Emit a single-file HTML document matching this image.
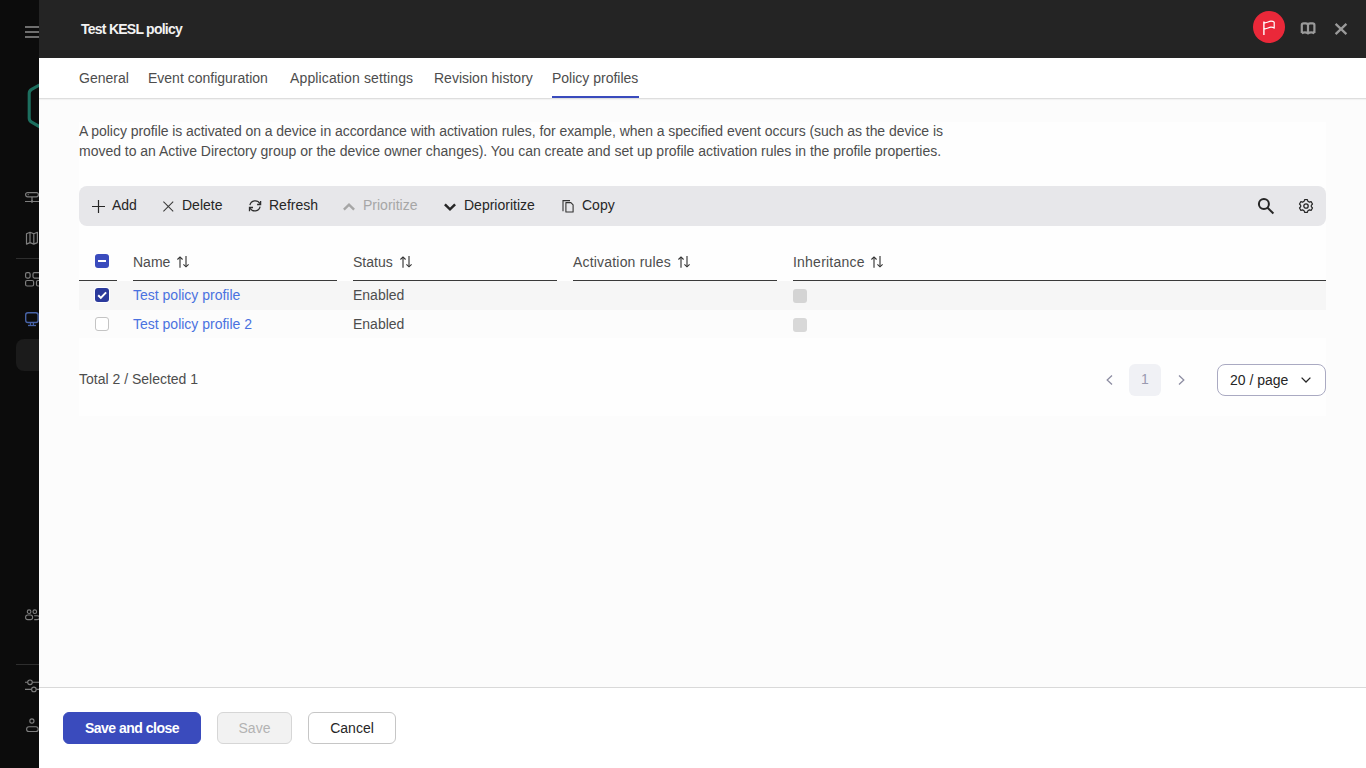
<!DOCTYPE html>
<html><head><meta charset="utf-8">
<style>
*{box-sizing:border-box;margin:0;padding:0}
html,body{width:1366px;height:768px;overflow:hidden;font-family:"Liberation Sans",sans-serif;font-size:14px;background:#0c0c0c}
svg{position:absolute;overflow:visible}
#side{position:absolute;left:0;top:0;width:39px;height:768px;background:#0c0c0c;overflow:hidden}
#modal{position:absolute;left:39px;top:0;width:1327px;height:768px;background:#fcfcfc}
#hdr{position:absolute;left:0;top:0;width:1327px;height:58px;background:#242424}
#title{position:absolute;left:42px;top:20px;color:#f2f2f2;font-weight:bold;font-size:14px;line-height:18px;white-space:nowrap;letter-spacing:-0.75px}
#tabs{position:absolute;left:0;top:58px;width:1327px;height:41px;background:#fff;border-bottom:1px solid #dedede;box-shadow:0 1px 1px rgba(0,0,0,0.04)}
.tab{position:absolute;top:12px;color:#4d4d4d;font-size:14px;line-height:16px;white-space:nowrap}
#tabline{position:absolute;left:513px;top:38px;width:87px;height:2px;background:#3a4bbd}
#panel{position:absolute;left:40px;top:122px;width:1247px;height:294px;background:#fefefe}
.desc{position:absolute;left:40px;color:#4d4d4d;line-height:20px;white-space:nowrap;letter-spacing:-0.053px}
#tb{position:absolute;left:40px;top:186px;width:1247px;height:40px;background:#e7e7ea;border-radius:8px}
.tbt{position:absolute;top:11px;color:#262626;line-height:16px;white-space:nowrap}
.th{position:absolute;top:254px;color:#4d4d4d;line-height:16px;white-space:nowrap}
.hl{position:absolute;top:280px;height:1px;background:#3a3a3a}
.row{position:absolute;left:40px;width:1247px}
.cell{position:absolute;line-height:16px;white-space:nowrap;color:#4d4d4d}
.lnk{color:#4a72e0}
#footline{position:absolute;left:0;top:687px;width:1327px;height:1px;background:#d9d9d9}
#foot{position:absolute;left:0;top:688px;width:1327px;height:80px;background:#fff}
.btn{position:absolute;top:712px;height:32px;border-radius:6px;text-align:center;line-height:30px;font-size:14px;white-space:nowrap}
</style></head><body>
<div id="side">
  <!-- hamburger -->
  <svg style="left:25px;top:26px" width="16" height="12"><path d="M0 1H16M0 6H16M0 11H16" stroke="#6e6e6e" stroke-width="2"/></svg>
  <!-- hexagon logo -->
  <svg style="left:0;top:0" width="60" height="140"><path d="M57 75.5 L31.6 89.4 Q29.2 90.8 29.2 93.6 L29.2 118 Q29.2 120.8 31.6 122.2 L57 136.5" stroke="#1d6f5f" stroke-width="3.1" fill="none"/></svg>
  <!-- network -->
  <svg style="left:25px;top:192px" width="16" height="12"><rect x="0.6" y="0.6" width="12.8" height="4.2" rx="2" stroke="#7f7f7f" stroke-width="1.2" fill="none"/><path d="M7 5V9.5M0 9.5H16" stroke="#7f7f7f" stroke-width="1.2"/><circle cx="3.2" cy="2.7" r="0.6" fill="#7f7f7f"/><circle cx="7" cy="9.5" r="1.2" fill="#7f7f7f"/></svg>
  <!-- map -->
  <svg style="left:25px;top:231px" width="16" height="14"><path d="M1.5 2.8 L5 1.3 L8.8 2.8 L12.4 1.3 V11.6 L8.8 13.1 L5 11.6 L1.5 13.1 Z M5 1.3 V11.6 M8.8 2.8 V13.1" stroke="#7f7f7f" stroke-width="1.2" fill="none" stroke-linejoin="round"/></svg>
  <div style="position:absolute;left:16px;top:258px;width:30px;height:1px;background:#2e2e2e"></div>
  <!-- grid -->
  <svg style="left:25px;top:272px" width="16" height="15"><rect x="0.6" y="0.6" width="4.5" height="5.5" rx="1.5" stroke="#7f7f7f" stroke-width="1.2" fill="none"/><rect x="8" y="0.6" width="8" height="5.5" rx="1.5" stroke="#7f7f7f" stroke-width="1.2" fill="none"/><rect x="0.6" y="8.5" width="8" height="5.5" rx="1.5" stroke="#7f7f7f" stroke-width="1.2" fill="none"/><rect x="11.5" y="8.5" width="8" height="5.5" rx="1.5" stroke="#7f7f7f" stroke-width="1.2" fill="none"/></svg>
  <!-- monitor -->
  <svg style="left:25px;top:312px" width="16" height="15"><rect x="0.7" y="0.7" width="12.4" height="9.8" rx="2.2" stroke="#4864a8" stroke-width="1.35" fill="none"/><path d="M5.4 10.6V13M8.4 10.6V13" stroke="#4864a8" stroke-width="1.1"/><path d="M3 13.5 H11" stroke="#4864a8" stroke-width="1.3"/></svg>
  <div style="position:absolute;left:16px;top:339px;width:40px;height:32px;background:#1b1b1b;border-radius:8px"></div>
  <!-- users -->
  <svg style="left:25px;top:609px" width="16" height="12"><circle cx="4.1" cy="2.7" r="1.8" stroke="#7f7f7f" stroke-width="1.1" fill="none"/><circle cx="9.8" cy="2.7" r="1.8" stroke="#7f7f7f" stroke-width="1.1" fill="none"/><rect x="0.6" y="6" width="7" height="4.6" rx="2.2" stroke="#7f7f7f" stroke-width="1.1" fill="none"/><path d="M9.2 6.7 H12 Q14.5 6.7 14.5 8.7 Q14.5 10.6 12 10.6 H9.2" stroke="#7f7f7f" stroke-width="1.1" fill="none"/></svg>
  <div style="position:absolute;left:16px;top:664px;width:30px;height:1px;background:#2e2e2e"></div>
  <!-- sliders -->
  <svg style="left:25px;top:679px" width="16" height="14"><path d="M0 3.3H2.6M7.4 3.3H16M0 10.4H6.5M11.3 10.4H16" stroke="#7f7f7f" stroke-width="1.1"/><circle cx="5" cy="3.3" r="2.3" stroke="#7f7f7f" stroke-width="1.1" fill="none"/><circle cx="8.9" cy="10.4" r="2.3" stroke="#7f7f7f" stroke-width="1.1" fill="none"/></svg>
  <!-- user -->
  <svg style="left:25px;top:718px" width="16" height="14"><circle cx="6.9" cy="3" r="2.1" stroke="#7f7f7f" stroke-width="1.1" fill="none"/><rect x="1.6" y="8.8" width="11.6" height="4.7" rx="2.35" stroke="#7f7f7f" stroke-width="1.1" fill="none"/></svg>
</div>
<div id="modal">
  <div id="hdr">
    <div id="title">Test KESL policy</div>
    <div style="position:absolute;left:1214px;top:11px;width:32px;height:32px;border-radius:50%;background:#ea2839"></div>
    <svg style="left:1224px;top:21px" width="14" height="15"><path d="M0.9 0.6V14" stroke="#fff" stroke-width="1.4"/><path d="M0.9 1.6 C3.5 2.6 5.5 0.2 8 0.2 C9.5 0.2 10.6 0.6 11.2 1.2 V7.2 C10.6 6.6 9.5 6.2 8 6.2 C5.5 6.2 3.5 8.6 0.9 7.6" stroke="#fff" stroke-width="1.2" fill="none" stroke-linejoin="round"/></svg>
    <!-- book -->
    <svg style="left:1261px;top:22px" width="16" height="13"><path d="M1.8 11 V3 Q1.8 1.3 3.6 1.3 H5.8 Q8 1.3 8 3.2 V11 M14.4 11 V3 Q14.4 1.3 12.6 1.3 H10.2 Q8 1.3 8 3.2 M1.8 11.4 Q4.9 9.4 8 11.4 Q11.1 9.4 14.4 11.4" stroke="#9a9a9a" stroke-width="2.2" fill="none"/></svg>
    <!-- close -->
    <svg style="left:1295px;top:22px" width="14" height="14"><path d="M1.6 1.8 L12.4 12.1 M12.4 1.8 L1.6 12.1" stroke="#9a9a9a" stroke-width="2.3"/></svg>
  </div>
  <div id="tabs">
    <div class="tab" style="left:40px">General</div>
    <div class="tab" style="left:109px">Event configuration</div>
    <div class="tab" style="left:251px;letter-spacing:0.13px">Application settings</div>
    <div class="tab" style="left:395px">Revision history</div>
    <div class="tab" style="left:513px">Policy profiles</div>
    <div id="tabline"></div>
  </div>
  <div id="panel"></div>
  <div class="desc" style="top:121px">A policy profile is activated on a device in accordance with activation rules, for example, when a specified event occurs (such as the device is</div>
  <div class="desc" style="top:141px;letter-spacing:-0.018px">moved to an Active Directory group or the device owner changes). You can create and set up profile activation rules in the profile properties.</div>
  <div id="tb">
    <svg style="left:13px;top:14px" width="13" height="13"><path d="M6.5 0V13M0 6.5H13" stroke="#262626" stroke-width="1.2"/></svg>
    <div class="tbt" style="left:33px">Add</div>
    <svg style="left:84px;top:14.5px" width="11" height="11"><path d="M0.4 0.6L10.2 10.4M10.2 0.6L0.4 10.4" stroke="#3a3a3a" stroke-width="1.05"/></svg>
    <div class="tbt" style="left:103px">Delete</div>
    <svg style="left:170px;top:14px" width="13" height="12"><path d="M0.9 5.1 A5.4 5.4 0 0 1 10.9 3.6 M11.1 6.6 A5.4 5.4 0 0 1 1.1 8.2" stroke="#2e2e2e" stroke-width="1.25" fill="none"/><path d="M11.6 0.9 V4.5 H8.1 M0.5 11.2 V7.5 H4" stroke="#2e2e2e" stroke-width="1.3" fill="none"/></svg>
    <div class="tbt" style="left:190px">Refresh</div>
    <svg style="left:264px;top:17px" width="12" height="8"><path d="M0.9 6.6 L6 1.6 L11.1 6.6" stroke="#a6a6a6" stroke-width="2.4" fill="none"/></svg>
    <div class="tbt" style="left:284px;color:#a6a6a6">Prioritize</div>
    <svg style="left:365px;top:17px" width="12" height="8"><path d="M0.9 1.3 L6 6.3 L11.1 1.3" stroke="#262626" stroke-width="2.5" fill="none"/></svg>
    <div class="tbt" style="left:385px">Deprioritize</div>
    <svg style="left:483px;top:13px" width="12" height="14"><path d="M1 12.3 V1.6 H8" stroke="#333" stroke-width="1.1" fill="none"/><path d="M3.9 13 V3.6 H8.9 L11.1 5.8 V13 Z" stroke="#333" stroke-width="1.1" fill="none" stroke-linejoin="round"/></svg>
    <div class="tbt" style="left:503px">Copy</div>
    <svg style="left:1179px;top:12px" width="16" height="16"><circle cx="5.9" cy="6" r="5" stroke="#262626" stroke-width="2" fill="none"/><path d="M9.6 9.7 L15.4 15.5" stroke="#262626" stroke-width="2"/></svg>
    <svg style="left:1220px;top:13px" width="14" height="14"><path d="M5.6 0.6 H8.4 L8.9 2.3 L10.4 3.1 L12.1 2.6 L13.5 5 L12.3 6.3 V7.7 L13.5 9 L12.1 11.4 L10.4 10.9 L8.9 11.7 L8.4 13.4 H5.6 L5.1 11.7 L3.6 10.9 L1.9 11.4 L0.5 9 L1.7 7.7 V6.3 L0.5 5 L1.9 2.6 L3.6 3.1 L5.1 2.3 Z" stroke="#262626" stroke-width="1.2" fill="none" stroke-linejoin="round"/><circle cx="7" cy="7" r="2.2" stroke="#262626" stroke-width="1.3" fill="none"/></svg>
  </div>
  <!-- header checkbox -->
  <div style="position:absolute;left:56px;top:254px;width:14px;height:14px;border-radius:3px;background:#3a4bbd"></div>
  <div style="position:absolute;left:59px;top:260px;width:8px;height:2px;background:#fff"></div>
  <div class="th" style="left:94px">Name</div>
  <div class="th" style="left:314px">Status</div>
  <div class="th" style="left:534px;letter-spacing:0.19px">Activation rules</div>
  <div class="th" style="left:754px;letter-spacing:0.22px">Inheritance</div>
  <svg style="left:138px;top:256px" width="13" height="12"><path d="M3 1.2V11.75M9 0.1V10.6" stroke="#6f6f6f" stroke-width="1.6"/><path d="M0.4 3.5 L3 1 L5.6 3.5 M6.4 8.4 L9 10.8 L11.6 8.4" stroke="#333" stroke-width="1.1" fill="none"/></svg>
  <svg style="left:361px;top:256px" width="13" height="12"><path d="M3 1.2V11.75M9 0.1V10.6" stroke="#6f6f6f" stroke-width="1.6"/><path d="M0.4 3.5 L3 1 L5.6 3.5 M6.4 8.4 L9 10.8 L11.6 8.4" stroke="#333" stroke-width="1.1" fill="none"/></svg>
  <svg style="left:639px;top:256px" width="13" height="12"><path d="M3 1.2V11.75M9 0.1V10.6" stroke="#6f6f6f" stroke-width="1.6"/><path d="M0.4 3.5 L3 1 L5.6 3.5 M6.4 8.4 L9 10.8 L11.6 8.4" stroke="#333" stroke-width="1.1" fill="none"/></svg>
  <svg style="left:832px;top:256px" width="13" height="12"><path d="M3 1.2V11.75M9 0.1V10.6" stroke="#6f6f6f" stroke-width="1.6"/><path d="M0.4 3.5 L3 1 L5.6 3.5 M6.4 8.4 L9 10.8 L11.6 8.4" stroke="#333" stroke-width="1.1" fill="none"/></svg>
  <div class="hl" style="left:40px;width:38px"></div>
  <div class="hl" style="left:94px;width:204px"></div>
  <div class="hl" style="left:314px;width:204px"></div>
  <div class="hl" style="left:534px;width:204px"></div>
  <div class="hl" style="left:754px;width:533px"></div>
  <!-- rows -->
  <div class="row" style="top:281px;height:29px;background:#f6f6f6"></div>
  <div class="row" style="top:310px;height:28px;background:#fcfcfc"></div>
  <div style="position:absolute;left:55px;top:287px;width:16px;height:16px;border-radius:4px;background:#fff"></div>
  <div style="position:absolute;left:56px;top:288px;width:14px;height:14px;border-radius:3px;background:#2b3a9c"></div>
  <svg style="left:56px;top:288px" width="14" height="14"><path d="M3.2 7.3 L5.8 9.9 L11.1 4.4" stroke="#fff" stroke-width="2" fill="none"/></svg>
  <div style="position:absolute;left:56px;top:317px;width:14px;height:14px;border-radius:3px;background:#fff;border:1px solid #c4c4c4"></div>
  <div class="cell lnk" style="left:94px;top:287px">Test policy profile</div>
  <div class="cell" style="left:314px;top:287px">Enabled</div>
  <div style="position:absolute;left:754px;top:289px;width:14px;height:14px;border-radius:3px;background:#d4d4d4"></div>
  <div class="cell lnk" style="left:94px;top:316px">Test policy profile 2</div>
  <div class="cell" style="left:314px;top:316px">Enabled</div>
  <div style="position:absolute;left:754px;top:318px;width:14px;height:14px;border-radius:3px;background:#d8d8d8"></div>
  <!-- footer of table -->
  <div class="cell" style="left:40px;top:371px">Total 2 / Selected 1</div>
  <svg style="left:1067px;top:375px" width="7" height="10"><path d="M6 0.5 L1.2 5 L6 9.5" stroke="#8d8da2" stroke-width="1.3" fill="none"/></svg>
  <div style="position:absolute;left:1090px;top:364px;width:32px;height:32px;border-radius:6px;background:#f0f1f5;color:#9a9ab0;text-align:center;line-height:30px">1</div>
  <svg style="left:1139px;top:375px" width="7" height="10"><path d="M1 0.5 L5.8 5 L1 9.5" stroke="#8d8da2" stroke-width="1.3" fill="none"/></svg>
  <div style="position:absolute;left:1178px;top:364px;width:109px;height:32px;border-radius:8px;border:1px solid #aaaac2;background:#fff"></div>
  <div class="cell" style="left:1191px;top:372px;color:#262626">20 / page</div>
  <svg style="left:1262px;top:377px" width="10" height="6"><path d="M0.6 0.6 L5 5 L9.4 0.6" stroke="#262626" stroke-width="1.3" fill="none"/></svg>
  <div id="footline"></div>
  <div id="foot"></div>
  <div class="btn" style="left:24px;width:138px;background:#3a4bbd;color:#fff;border:1px solid #3a4bbd;font-weight:bold;letter-spacing:-0.5px">Save and close</div>
  <div class="btn" style="left:178px;width:75px;background:#f2f2f2;color:#b3b3b3;border:1px solid #d6d6d6">Save</div>
  <div class="btn" style="left:269px;width:88px;background:#fff;color:#262626;border:1px solid #c6c6c6">Cancel</div>
</div>
</body></html>
